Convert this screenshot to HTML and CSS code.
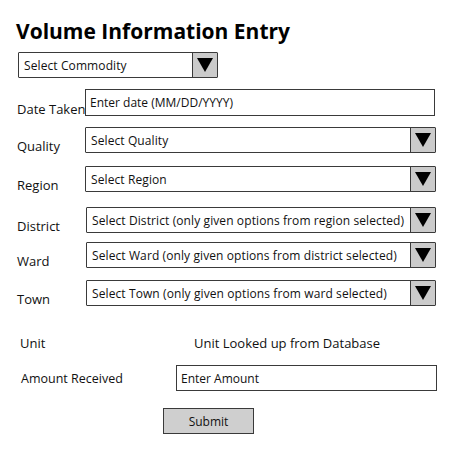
FILE: index.html
```html
<!DOCTYPE html>
<html>
<head>
<meta charset="utf-8">
<link rel="stylesheet" href="styles.css">
</head>
<body>
<div class="page">
  <h1 class="title">Volume Information Entry</h1>
  <div class="select select-commodity">
    <span class="select-text">Select Commodity</span>
    <span class="arrow"><span class="tri"></span></span>
  </div>

  <div class="row row-date">
    <span class="label">Date Taken</span>
    <div class="input input-date">Enter date (MM/DD/YYYY)</div>
  </div>
  <div class="row row-quality">
    <span class="label">Quality</span>
    <div class="select select-wide">
      <span class="select-text">Select Quality</span>
      <span class="arrow"><span class="tri"></span></span>
    </div>
  </div>
  <div class="row row-region">
    <span class="label">Region</span>
    <div class="select select-wide">
      <span class="select-text">Select Region</span>
      <span class="arrow"><span class="tri"></span></span>
    </div>
  </div>
  <div class="row row-district">
    <span class="label">District</span>
    <div class="select select-wide shift">
      <span class="select-text">Select District (only given options from region selected)</span>
      <span class="arrow"><span class="tri"></span></span>
    </div>
  </div>
  <div class="row row-ward">
    <span class="label">Ward</span>
    <div class="select select-wide shift">
      <span class="select-text">Select Ward (only given options from district selected)</span>
      <span class="arrow"><span class="tri"></span></span>
    </div>
  </div>
  <div class="row row-town">
    <span class="label">Town</span>
    <div class="select select-wide shift">
      <span class="select-text">Select Town (only given options from ward selected)</span>
      <span class="arrow"><span class="tri"></span></span>
    </div>
  </div>

  <div class="unit-row">
    <span class="unit-label">Unit</span>
    <span class="unit-value">Unit Looked up from Database</span>
  </div>
  <div class="amount-row">
    <span class="amount-label">Amount Received</span>
    <div class="input input-amount">Enter Amount</div>
  </div>
  <div class="submit-row">
    <div class="button">Submit</div>
  </div>
</div>
</body>
</html>
```

FILE: styles.css
```css
* { box-sizing: border-box; }
html, body { margin: 0; padding: 0; background: #fff; }
body {
  font-family: "Open Sans", "DejaVu Sans", sans-serif;
  color: #111;
  width: 452px;
  height: 449px;
  overflow: hidden;
}
.page {
  padding: 17px 0 0 0;
}
.title {
  margin: 0 0 0 16px;
  font-size: 21px;
  line-height: 28px;
  font-weight: 700;
  color: #000;
  letter-spacing: 0;
}
.select {
  display: flex;
  align-items: stretch;
  height: 26px;
  border: 1.5px solid #3a3a3a;
  background: #fff;
  border-radius: 1px;
}
.select-text {
  flex: 1;
  display: flex;
  align-items: center;
  padding-left: 5px;
  font-size: 12px;
  letter-spacing: 0.1px;
  white-space: nowrap;
  overflow: hidden;
}
.arrow {
  width: 25px;
  background: #cbcbcb;
  border-left: 1.5px solid #3a3a3a;
  display: flex;
  align-items: center;
  justify-content: center;
}
.tri {
  width: 0;
  height: 0;
  border-left: 8px solid transparent;
  border-right: 8px solid transparent;
  border-top: 14px solid #000;
}
.select-commodity {
  margin: 7px 0 0 18px;
  width: 200px;
}
.row {
  display: flex;
  align-items: flex-end;
  padding-left: 17px;
}
.label {
  width: 68px;
  font-size: 13px;
  line-height: 14px;
  white-space: nowrap;
}
.input {
  height: 27px;
  border: 1.5px solid #3a3a3a;
  display: flex;
  align-items: center;
  padding-left: 4px;
  font-size: 12px;
  white-space: nowrap;
}
.input-date { width: 350px; }
.select-wide { width: 351px; }
.select-wide.shift { margin-left: 1px; width: 350px; }
.row-date { margin-top: 11px; }
.row-quality { margin-top: 11px; }
.row-region { margin-top: 13px; }
.row-district { margin-top: 15px; }
.row-ward { margin-top: 9px; }
.row-town { margin-top: 12px; }
.unit-row {
  display: flex;
  margin-top: 29px;
  font-size: 13px;
  line-height: 16px;
}
.unit-label { width: 194px; padding-left: 20px; }
.amount-row {
  display: flex;
  align-items: center;
  margin-top: 14px;
}
.amount-label {
  width: 176px;
  padding-left: 21px;
  font-size: 12.5px;
  padding-top: 1px;
}
.input-amount { width: 261px; height: 26px; }
.submit-row {
  display: flex;
  margin-top: 17px;
  padding-left: 163px;
}
.button {
  width: 91px;
  height: 26px;
  background: #cfcfcf;
  border: 1.5px solid #3a3a3a;
  display: flex;
  align-items: center;
  justify-content: center;
  font-size: 12px;
}
```
